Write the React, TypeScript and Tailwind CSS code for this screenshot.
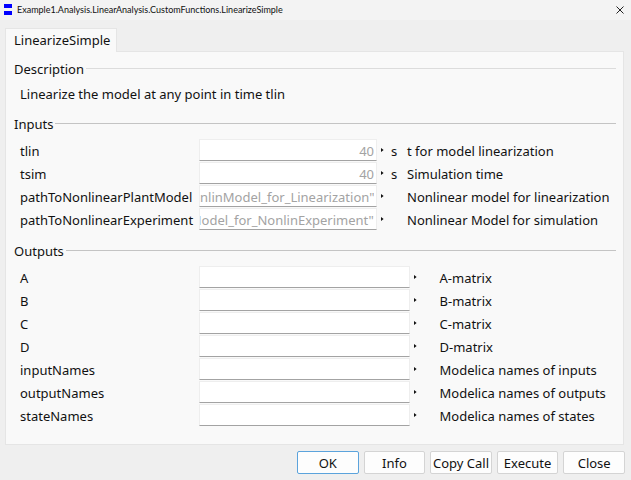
import { useLayoutEffect, useRef, useState } from "react";
import type { ReactNode } from "react";

type Parameter = { name: string; value: string; unit?: string; description: string };

const inputs: Parameter[] = [
  { name: "tlin", value: "40", unit: "s", description: "t for model linearization" },
  { name: "tsim", value: "40", unit: "s", description: "Simulation time" },
  {
    name: "pathToNonlinearPlantModel",
    value: '"NonlinModel_for_Linearization"',
    description: "Nonlinear model for linearization",
  },
  {
    name: "pathToNonlinearExperiment",
    value: '"NonlinModel_for_NonlinExperiment"',
    description: "Nonlinear Model for simulation",
  },
];

const outputs: Parameter[] = [
  { name: "A", value: "", description: "A-matrix" },
  { name: "B", value: "", description: "B-matrix" },
  { name: "C", value: "", description: "C-matrix" },
  { name: "D", value: "", description: "D-matrix" },
  { name: "inputNames", value: "", description: "Modelica names of inputs" },
  { name: "outputNames", value: "", description: "Modelica names of outputs" },
  { name: "stateNames", value: "", description: "Modelica names of states" },
];

function Field({ id, initial }: { id: string; initial: string }) {
  const [value, setValue] = useState(initial);
  const ref = useRef<HTMLInputElement>(null);

  // Long values show their end, as the cursor sits after the last character.
  useLayoutEffect(() => {
    if (ref.current) ref.current.scrollLeft = ref.current.scrollWidth;
  }, []);

  return (
    <input
      ref={ref}
      id={id}
      type="text"
      value={value}
      onChange={(event) => setValue(event.target.value)}
      className="h-[22px] w-full min-w-0 border border-[#eeeeee] border-b-[#a3a3a3] bg-white pt-0.5 pr-0.5 text-right leading-[19px] text-[#a3a3a3] outline-none"
    />
  );
}

function MenuArrow({ name }: { name: string }) {
  return (
    <button type="button" aria-label={`Edit ${name}`} className="flex h-[21px] items-center pl-1">
      <svg width="3" height="4" viewBox="0 0 3 4" fill="#111111" aria-hidden="true">
        <path d="M0 0L2.6 2L0 4Z" />
      </svg>
    </button>
  );
}

function Section({ title, children }: { title: string; children: ReactNode }) {
  return (
    <section className="group">
      <div className="flex h-5 items-center gap-0.5">
        <h2>{title}</h2>
        <div className="mb-0.5 h-px flex-1 bg-[#c4c4c4] group-first:bg-[#dcdcdc]" />
      </div>
      {children}
    </section>
  );
}

function InputRow({ item }: { item: Parameter }) {
  return (
    <div className="grid h-[23px] grid-cols-[179px_178fr_14px_16px_209fr] leading-[25px]">
      <label htmlFor={item.name} className="whitespace-nowrap">{item.name}</label>
      <Field id={item.name} initial={item.value} />
      <MenuArrow name={item.name} />
      <span>{item.unit}</span>
      <span className="whitespace-nowrap">{item.description}</span>
    </div>
  );
}

function OutputRow({ item }: { item: Parameter }) {
  return (
    <div className="grid h-[23px] grid-cols-[179px_210fr_30px_176fr] leading-[25px]">
      <label htmlFor={item.name} className="whitespace-nowrap">{item.name}</label>
      <Field id={item.name} initial={item.value} />
      <MenuArrow name={item.name} />
      <span className="whitespace-nowrap">{item.description}</span>
    </div>
  );
}

export default function App() {
  return (
    <div className="flex min-h-screen flex-col bg-[#efefef] font-['Noto_Sans',sans-serif] text-[13px] leading-[23px] text-[#111111]">
      <header className="flex h-5 items-center bg-[#f3f3f3] pr-[7px] pl-1">
        <svg width="8" height="12" viewBox="0 0 8 12" fill="#0000ff" aria-hidden="true">
          <rect x="0" y="0" width="8" height="4" />
          <rect x="0" y="7" width="8" height="4" />
        </svg>
        <h1 className="ml-[5px] flex-1 font-[Lato,sans-serif] text-[9px] leading-5 whitespace-nowrap">
          Example1.Analysis.LinearAnalysis.CustomFunctions.LinearizeSimple
        </h1>
        <button type="button" aria-label="Close window">
          <svg width="8" height="8" viewBox="0 0 8 8" fill="none" stroke="#222222" aria-hidden="true">
            <path d="M0.5 0.5L7.5 7.5M7.5 0.5L0.5 7.5" />
          </svg>
        </button>
      </header>

      <main className="flex flex-col pt-2 pr-[7px] pl-[5px]">
        <div role="tablist" className="z-10 -mb-px flex">
          <button
            type="button"
            role="tab"
            aria-selected="true"
            className="h-6 border border-b-0 border-[#e5e5e5] bg-[#f9f9f9] pr-1.5 pl-2"
          >
            LinearizeSimple
          </button>
        </div>
        <div role="tabpanel" className="flex flex-col border border-[#e5e5e5] bg-[#f9f9f9] pt-[7px] pr-[7px] pb-[17px] pl-2">
          <Section title="Description">
            <p className="pt-1 pb-2 pl-1.5">Linearize the model at any point in time tlin</p>
          </Section>
          <Section title="Inputs">
            <div className="pt-[5px] pb-[10px] pl-1.5">
              {inputs.map((item) => (
                <InputRow key={item.name} item={item} />
              ))}
            </div>
          </Section>
          <Section title="Outputs">
            <div className="pt-[5px] pl-1.5">
              {outputs.map((item) => (
                <OutputRow key={item.name} item={item} />
              ))}
            </div>
          </Section>
        </div>
      </main>

      <footer className="flex justify-end pt-1.5 pr-1.5">
        <div className="grid w-[328px] grid-cols-5 gap-[5px]">
          {["OK", "Info", "Copy Call", "Execute", "Close"].map((name) => (
            <button
              key={name}
              type="button"
              className="h-[23px] rounded-[2px] border border-[#d4d4d4] bg-[#fdfdfd] leading-[22px] whitespace-nowrap first:border-[#5ba3dc]"
            >
              {name}
            </button>
          ))}
        </div>
      </footer>
    </div>
  );
}
